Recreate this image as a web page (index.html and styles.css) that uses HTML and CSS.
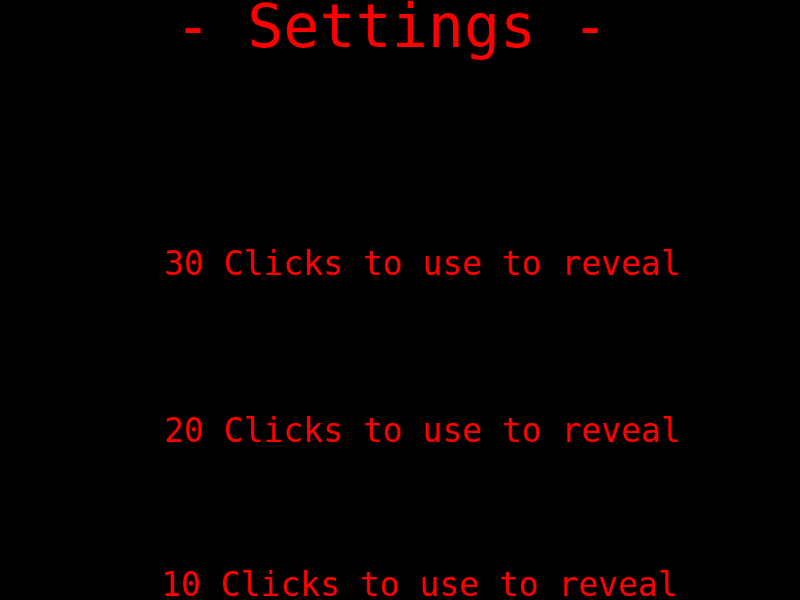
FILE: index.html
```html
<!DOCTYPE html>
<html>
<head>
<meta charset="utf-8">
<link rel="stylesheet" href="styles.css">
</head>
<body>
<div class="screen">
  <h1 class="title">- Settings -</h1>
  <div class="option option-30">30 Clicks to use to reveal</div>
  <div class="option option-20">20 Clicks to use to reveal</div>
  <div class="option option-10">10 Clicks to use to reveal</div>
</div>
</body>
</html>
```
FILE: styles.css
```css
html, body {
  margin: 0;
  padding: 0;
  background: #000;
}
.screen {
  width: 800px;
  height: 600px;
  overflow: hidden;
  display: flex;
  flex-direction: column;
  align-items: flex-start;
  color: #ff0000;
  font-family: "DejaVu Sans Mono", monospace;
}
.title {
  margin: 0 0 0 175px;
  font-size: 60px;
  font-weight: normal;
  line-height: 52px;
  white-space: pre;
}
.option {
  font-size: 33px;
  line-height: 40px;
  white-space: pre;
  margin-left: 164px;
}
.option-30 { margin-top: 192px; }
.option-20 { margin-top: 127px; }
.option-10 { margin-top: 114px; margin-left: 161px; }
```
